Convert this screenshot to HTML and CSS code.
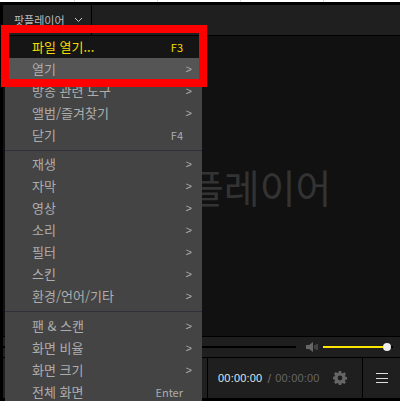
FILE: index.html
```html
<!DOCTYPE html>
<html lang="ko">
<head>
<meta charset="utf-8">
<title>팟플레이어</title>
<link rel="stylesheet" href="styles.css">
</head>
<body>
<div class="page">
  <div class="topstrip"></div>
  <div class="window">
    <header class="titlebar">
      <div class="appbtn"><span>팟플레이어</span>
        <svg class="chev" width="9" height="6" viewBox="0 0 9 6"><path d="M1 1l3.500 3.500L8 1" fill="none" stroke="#c8c8c8" stroke-width="1"/></svg>
      </div>
    </header>
    <main class="stage">
      <div class="logo">팟플레이어</div>
    </main>
    <div class="seekrow">
      <div class="seek"></div>
      <svg class="vol" width="12" height="12" viewBox="0 0 12 12"><path d="M0 4h3l4-3v10L3 8H0z" fill="#666"/><path d="M9 4v4M11 3v6" stroke="#666" stroke-width="1"/></svg>
      <div class="volbar"><span class="knob"></span></div>
    </div>
    <footer class="controls">
      <div class="ctl-left"></div>
      <div class="ctl-time">
        <span class="now">00:00:00</span><span class="slash">/</span><span class="total">00:00:00</span>
        <svg class="gear" width="14" height="14" viewBox="0 0 14 14"><path fill="#666" fill-rule="evenodd" d="M5.800 0h2.400l.3 1.900 1.200.5L11.300 1.300 13 3l-1.100 1.600.5 1.200 1.600.3v2.400l-1.600.3-.5 1.200L13 11.300 11.300 13l-1.600-1.100-1.200.5-.3 1.600H5.800l-.3-1.600-1.200-.5L2.700 13 1 11.300l1.100-1.600-.5-1.200L0 8.200V5.800l1.600-.3.500-1.200L1 2.700 2.700 1l1.600 1.100 1.200-.5zM7 4.600a2.400 2.400 0 100 4.800 2.400 2.400 0 000-4.800z"/></svg>
      </div>
      <div class="ctl-menu"><span></span><span></span><span></span></div>
    </footer>
  </div>
  <nav class="menu">
    <ul class="group">
      <li class="item first"><span>파일 열기...</span><span class="key">F3</span></li>
      <li class="item hover"><span>열기</span><span class="arr">&gt;</span></li>
      <li class="item"><span>방송 관련 도구</span><span class="arr">&gt;</span></li>
      <li class="item"><span>앨범/즐겨찾기</span><span class="arr">&gt;</span></li>
      <li class="item"><span>닫기</span><span class="key">F4</span></li>
    </ul>
    <ul class="group">
      <li class="item"><span>재생</span><span class="arr">&gt;</span></li>
      <li class="item"><span>자막</span><span class="arr">&gt;</span></li>
      <li class="item"><span>영상</span><span class="arr">&gt;</span></li>
      <li class="item"><span>소리</span><span class="arr">&gt;</span></li>
      <li class="item"><span>필터</span><span class="arr">&gt;</span></li>
      <li class="item"><span>스킨</span><span class="arr">&gt;</span></li>
      <li class="item"><span>환경/언어/기타</span><span class="arr">&gt;</span></li>
    </ul>
    <ul class="group">
      <li class="item"><span>팬 &amp; 스캔</span><span class="arr">&gt;</span></li>
      <li class="item"><span>화면 비율</span><span class="arr">&gt;</span></li>
      <li class="item"><span>화면 크기</span><span class="arr">&gt;</span></li>
      <li class="item"><span>전체 화면</span><span class="key">Enter</span></li>
    </ul>
  </nav>
  <div class="highlight"></div>
</div>
</body>
</html>
```
FILE: styles.css
```css
* { box-sizing: border-box; }
html, body { margin: 0; padding: 0; }
body { width: 400px; height: 401px; overflow: hidden; background: #fff; font-family: "Noto Sans CJK KR", "Noto Sans", sans-serif; }
.page { position: relative; width: 400px; height: 401px; overflow: hidden; }
.topstrip { height: 2px; background: repeating-linear-gradient(90deg, #fff 0 74px, #ddd 74px 75px, #fff 75px 83px); }
.window { height: 399px; background: #000; padding: 3px 0 3px 3px; display: flex; flex-direction: column; }
.titlebar { height: 31px; background: #1f1f1f; border-bottom: 1px solid #000; display: flex; flex: none; }
.appbtn { width: 89px; border-right: 1px solid #000; display: flex; align-items: center; gap: 9px; padding-left: 11px; color: #bdbdbd; font-size: 11px; }
.stage { flex: 1; background: #111; position: relative; overflow: hidden; }
.logo { position: absolute; left: 149px; top: 120px; font-size: 39px; line-height: 60px; color: #333; white-space: nowrap; }
.seekrow { height: 22px; background: #1f1f1f; border-top: 1px solid #000; border-bottom: 1px solid #000; display: flex; align-items: center; flex: none; }
.seek { width: 293px; height: 2px; background: #000; flex: none; }
.vol { margin-left: 10px; flex: none; }
.volbar { position: relative; width: 70px; height: 2px; background: linear-gradient(90deg, #ffe600 0 62px, #000 62px); margin-left: 5px; flex: none; }
.knob { position: absolute; left: 60px; top: -3px; width: 8px; height: 8px; border-radius: 50%; background: #eee; }
.controls { height: 40px; background: #1f1f1f; display: flex; flex: none; }
.ctl-left { width: 205px; border-right: 1px solid #000; }
.ctl-time { width: 155px; border-right: 1px solid #000; display: flex; align-items: center; padding-left: 10px; font-size: 11px; font-family: "Liberation Sans", sans-serif; letter-spacing: .2px; }
.now { color: #d8e8f0; }
.slash { color: #6a6a6a; margin: 0 4px 0 5px; font-size: 13px; }
.total { color: #666; }
.gear { margin-left: 13px; flex: none; }
.ctl-menu { flex: 1; display: flex; flex-direction: column; align-items: center; justify-content: center; gap: 3.500px; padding-left: 1px; }
.ctl-menu span { width: 12px; height: 1px; background: #ddd; display: block; }
.menu { position: absolute; left: 5px; top: 36px; width: 197px; height: 365px; background: #444; }
.group { list-style: none; margin: 0; padding: 0 0 4px; border-bottom: 1px solid #30303c; }
.group + .group { padding-top: 2px; }
.group:last-child { border-bottom: 0; padding-top: 3px; }
.item { height: 22px; display: flex; justify-content: space-between; align-items: center; padding: 0 19px 0 27px; color: #adadad; font-size: 13px; line-height: 22px; white-space: nowrap; }
.item.first { background: #151515; color: #f5dc00; }
.item.hover { background: #555; }
.key { font-size: 11px; }
.arr { font-family: "Liberation Sans", sans-serif; font-size: 11px; margin-right: -9px; }
.highlight { position: absolute; left: 1px; top: 25px; width: 206px; height: 62px; border: 8px solid #f00; pointer-events: none; }
```
